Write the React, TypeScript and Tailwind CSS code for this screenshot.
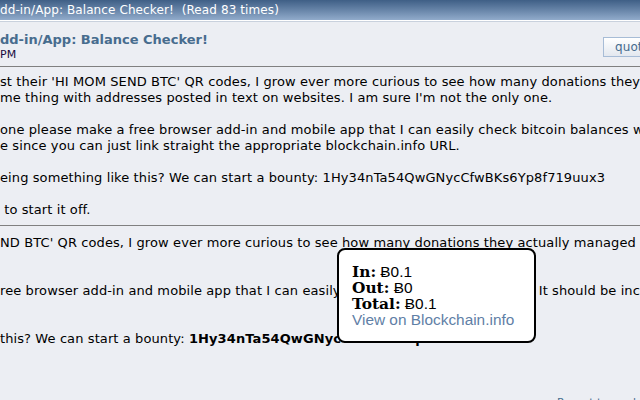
import React from "react";

export default function App() {
  const sans = { fontFamily: '"DejaVu Sans", Verdana, sans-serif' };
  return (
    <div
      className="relative w-[640px] h-[400px] overflow-hidden bg-[#eceef3] text-[13px] tracking-[0.1px] text-black"
      style={sans}
    >
      {/* title bar */}
      <div className="h-[21px] bg-gradient-to-b from-[#3f5f86] to-[#91abcb] text-white text-[12px] leading-[21px] whitespace-nowrap border-b border-white">
        dd-in/App: Balance Checker!&nbsp; (Read 83 times)
      </div>
      <div className="h-px bg-[#c9d1dd]" />

      {/* post header */}
      <div className="h-[45px] flex justify-between border-b border-[#808080]">
        <div className="pt-[10px]">
          <div className="font-bold text-[#476c8e] leading-[16px] whitespace-nowrap tracking-normal">
            dd-in/App: Balance Checker!
          </div>
          <div className="text-[11px] leading-[13px] text-[#1a0a40]">PM</div>
        </div>
        <div className="pt-[15px]">
          <div className="h-[20px] w-[50px] -mr-[13px] border border-[#a7bcd6] bg-gradient-to-b from-[#ffffff] to-[#e3e8ef] text-[#476c8e] text-[12px] leading-[18px] pl-[11px]">
            quote
          </div>
        </div>
      </div>

      {/* first post body */}
      <div className="pt-[7px] leading-[16px] whitespace-nowrap h-[159px] border-b border-[#808080]">
        <div>st their 'HI MOM SEND BTC' QR codes, I grow ever more curious to see how many donations they actually managed</div>
        <div>me thing with addresses posted in text on websites. I am sure I'm not the only one.</div>
        <div className="h-[16px]" />
        <div>one please make a free browser add-in and mobile app that I can easily check bitcoin balances with</div>
        <div>e since you can just link straight the appropriate blockchain.info URL.</div>
        <div className="h-[16px]" />
        <div>eing something like this? We can start a bounty: 1Hy34nTa54QwGNycCfwBKs6Yp8f719uux3</div>
        <div className="h-[16px]" />
        <div>&nbsp;to start it off.</div>
      </div>

      {/* second section */}
      <div className="pt-[5px] leading-[24px] whitespace-nowrap">
        <div>ND BTC' QR codes, I grow ever more curious to see how many donations they actually managed</div>
        <div className="h-[24px]" />
        <div>ree browser add-in and mobile app that I can easily check bitcoin balances with? It should be incredibly</div>
        <div className="h-[24px]" />
        <div>
          this? We can start a bounty: <b>1Hy34nTa54QwGNycCfwBKs6Yp8f719uux3</b>
        </div>
      </div>

      <div className="flex justify-end pt-[45px] pr-0">
        <span className="text-[11px] leading-[13px] text-[#476c8e] whitespace-nowrap w-[83px] overflow-hidden tracking-normal">
          Report to moderator
        </span>
      </div>

      {/* popup */}
      <div
        className="absolute left-[337px] top-[248px] w-[199px] h-[95px] border-2 border-black rounded-[8px] bg-white pl-[13px] pt-[14px] text-[15.4px] leading-[16px] tracking-normal"
        style={{ fontFamily: '"Liberation Sans", Arial, sans-serif' }}
      >
        <div>
          <b style={{ fontFamily: '"DejaVu Serif", serif' }}>In:</b> Ƀ0.1
        </div>
        <div>
          <b style={{ fontFamily: '"DejaVu Serif", serif' }}>Out:</b> Ƀ0
        </div>
        <div>
          <b style={{ fontFamily: '"DejaVu Serif", serif' }}>Total:</b> Ƀ0.1
        </div>
        <div className="text-[#5f80a6]">View on Blockchain.info</div>
      </div>
    </div>
  );
}
